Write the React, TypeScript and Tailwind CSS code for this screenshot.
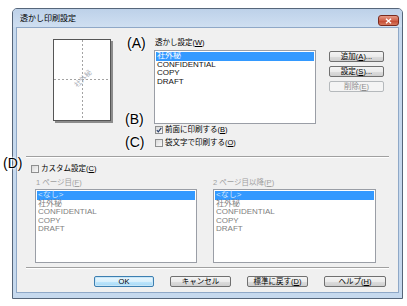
import React from "react";

const U = ({ children }: { children: React.ReactNode }) => (
  <span className="underline underline-offset-[1px]">{children}</span>
);

function Check({ checked }: { checked?: boolean }) {
  return (
    <div className="w-[8px] h-[8px] border border-[#8e8f8f] bg-[linear-gradient(135deg,#d8d8d8,#fafafa)] flex items-center justify-center shrink-0">
      {checked && (
        <svg width="6" height="6" viewBox="0 0 6 6">
          <path d="M0.8 3.2 L2.3 4.8 L5.3 0.8" fill="none" stroke="#2a3f6a" strokeWidth="1.2" />
        </svg>
      )}
    </div>
  );
}

function Btn({
  children,
  className,
}: {
  children: React.ReactNode;
  className: string;
}) {
  return (
    <div
      className={
        "h-[11px] rounded-[2px] border flex items-center justify-center text-[7.5px] leading-[8px] " +
        className
      }
    >
      {children}
    </div>
  );
}

const normalBtn =
  "border-[#707070] bg-[linear-gradient(#f4f4f4,#ebebeb_50%,#dddddd_51%,#cfcfcf)] text-black";
const disabledBtn = "border-[#b5b9bc] bg-[#f4f4f4] text-[#8c8c8c]";

function ListBox({
  items,
  disabled,
  className,
}: {
  items: string[];
  disabled?: boolean;
  className: string;
}) {
  return (
    <div className={"h-[74px] border border-[#9a9ea6] bg-white pt-[1px] px-[1px] " + className}>
      {items.map((it, i) => (
        <div
          key={i}
          className={
            "h-[8.6px] leading-[8.6px] text-[8px] pl-[1px] whitespace-nowrap " +
            (i === 0
              ? disabled
                ? "bg-[#3399ff] text-[#cfe3fb]"
                : "bg-[#3399ff] text-white"
              : disabled
              ? "text-[#808080]"
              : "text-[#111111]")
          }
        >
          {it}
        </div>
      ))}
    </div>
  );
}

const Anno = ({ children, className }: { children: React.ReactNode; className: string }) => (
  <div
    className={
      "absolute text-[14px] leading-[14px] text-black font-['Liberation_Sans',sans-serif] [text-shadow:0_0_2px_#fff,0_0_2px_#fff,0_0_3px_#fff] " +
      className
    }
  >
    {children}
  </div>
);

export default function App() {
  return (
    <div className="relative w-[407px] h-[306px] bg-white overflow-hidden pl-[12px] pt-[8px] font-['Liberation_Sans','Noto_Sans_CJK_JP',sans-serif] text-black">
      {/* window */}
      <div className="w-[391px] h-[291px] border border-[#56667a] rounded-t-[5px] bg-[#c6d9ee] flex flex-col">
        {/* title bar */}
        <div className="h-[18px] flex items-start pl-[7px] pr-[3px] rounded-t-[4px] bg-[linear-gradient(#bdd1e9,#cfdff1)]">
          <div className="self-center text-[8px] leading-[8px] mt-[1px]">透かし印刷設定</div>
          <div className="ml-auto mt-[6px] w-[21px] h-[11px] rounded-[3px] border border-[#7a2a1e] bg-[linear-gradient(#e59a87,#d0614a_50%,#c2452e_51%,#d77a5f)] flex items-center justify-center">
            <svg width="7" height="6" viewBox="0 0 7 6">
              <path d="M1 0.8 L6 5.2 M6 0.8 L1 5.2" stroke="#ffffff" strokeWidth="1.4" />
            </svg>
          </div>
        </div>
        {/* client */}
        <div className="mx-[3px] border border-[#8fa8c7] bg-[#f0f0f0] h-[266px] flex flex-col px-[9px]">
          {/* top section */}
          <div className="flex items-start pt-[11px]">
            <div className="ml-[27px] w-[58px] h-[82px] relative bg-white border border-[#555555] shadow-[2px_2px_0_#8c8c8c] shrink-0">
              <svg className="absolute inset-0" width="56" height="80" viewBox="0 0 56 80">
                <line x1="28.5" y1="0" x2="28.5" y2="80" stroke="#a3a3a3" strokeWidth="1" strokeDasharray="2 2" />
                <line x1="0" y1="39.5" x2="56" y2="39.5" stroke="#a3a3a3" strokeWidth="1" strokeDasharray="2 2" />
              </svg>
              <div className="absolute left-[17px] top-[34px] w-[24px] text-center text-[7px] leading-[9px] text-[#a9aeb8] -rotate-45">
                社外秘
              </div>
            </div>
            <div className="ml-[43px] w-[162px] flex flex-col shrink-0">
              <div className="h-[8px] leading-[8px] text-[7.5px] mb-[3px] pl-[1px]">
                透かし設定(<U>W</U>)
              </div>
              <ListBox className="w-[162px]" items={["社外秘", "CONFIDENTIAL", "COPY", "DRAFT"]} />
              <div className="mt-[1px] h-[10px] flex items-center gap-[2px] pl-[1px]">
                <Check checked />
                <span className="text-[7.5px] leading-[8px]">
                  前面に印刷する(<U>B</U>)
                </span>
              </div>
              <div className="mt-[3px] h-[10px] flex items-center gap-[2px] pl-[1px]">
                <Check />
                <span className="text-[7.5px] leading-[8px]">
                  袋文字で印刷する(<U>O</U>)
                </span>
              </div>
            </div>
            <div className="ml-[13px] mt-[12px] flex flex-col gap-[4px]">
              <Btn className={"w-[55px] " + normalBtn}>
                追加(<U>A</U>)...
              </Btn>
              <Btn className={"w-[55px] " + normalBtn}>
                設定(<U>S</U>)...
              </Btn>
              <Btn className={"w-[55px] " + disabledBtn}>
                削除(<U>E</U>)
              </Btn>
            </div>
          </div>
          {/* separator */}
          <div className="mt-[8px] h-[2px] border-t border-[#a0a0a0] border-b border-b-white" />
          {/* custom */}
          <div className="mt-[6px] h-[10px] flex items-center gap-[2px] pl-[5px]">
            <Check />
            <span className="text-[7.5px] leading-[8px]">
              カスタム設定(<U>C</U>)
            </span>
          </div>
          <div className="mt-[4px] flex gap-[16px] pl-[9px]">
            <div className="flex flex-col w-[162px]">
              <div className="h-[10px] leading-[10px] text-[7.5px] text-[#a0a0a0] pl-[1px] mb-[1px]">
                1 ページ目(<U>F</U>)
              </div>
              <ListBox
                disabled
                className="w-[162px]"
                items={["<なし>", "社外秘", "CONFIDENTIAL", "COPY", "DRAFT"]}
              />
            </div>
            <div className="flex flex-col w-[163px]">
              <div className="h-[10px] leading-[10px] text-[7.5px] text-[#a0a0a0] mb-[1px]">
                2 ページ目以降(<U>P</U>)
              </div>
              <ListBox
                disabled
                className="w-[163px]"
                items={["<なし>", "社外秘", "CONFIDENTIAL", "COPY", "DRAFT"]}
              />
            </div>
          </div>
          <div className="mt-[4px] h-[2px] border-t border-[#a0a0a0] border-b border-b-white" />
          <div className="mt-[7px] flex gap-[16px] pl-[68px]">
            <Btn className="w-[60px] border-[#3c7fb1] bg-[linear-gradient(#eaf6fd,#d9f0fc_50%,#bee6fd_51%,#a7d9f5)] shadow-[inset_0_0_0_1px_#c9e6f7]">
              OK
            </Btn>
            <Btn className={"w-[61px] " + normalBtn}>キャンセル</Btn>
            <Btn className={"w-[61px] " + normalBtn}>
              標準に戻す(<U>D</U>)
            </Btn>
            <Btn className={"w-[62px] " + normalBtn}>
              ヘルプ(<U>H</U>)
            </Btn>
          </div>
        </div>
      </div>
      <Anno className="left-[127px] top-[36px]">(A)</Anno>
      <Anno className="left-[125px] top-[112px]">(B)</Anno>
      <Anno className="left-[125px] top-[135px]">(C)</Anno>
      <Anno className="left-[3px] top-[156px]">(D)</Anno>
    </div>
  );
}
